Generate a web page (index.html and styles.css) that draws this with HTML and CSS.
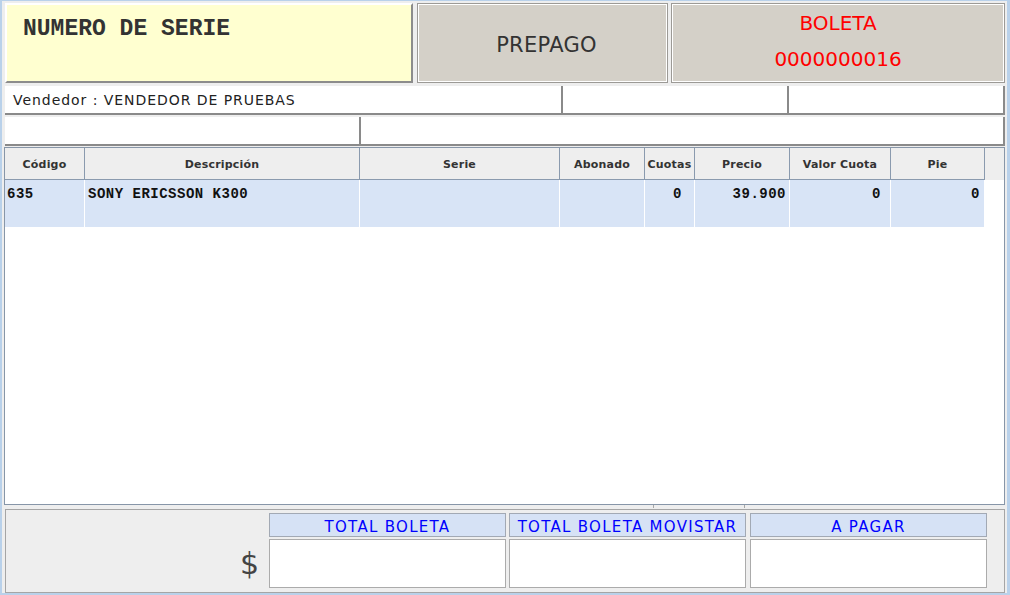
FILE: index.html
```html
<!DOCTYPE html>
<html lang="es">
<head>
<meta charset="utf-8">
<title>Venta</title>
<link rel="stylesheet" href="styles.css">
</head>
<body>
<div class="window">
  <div class="top">
    <div class="serie">NUMERO DE SERIE</div>
    <div class="prepago">PREPAGO</div>
    <div class="boleta"><div>BOLETA</div><div>0000000016</div></div>
  </div>
  <div class="row2">
    <div class="field w558 vend">Vendedor : VENDEDOR DE PRUEBAS</div>
    <div class="field w226"></div>
    <div class="field w216"></div>
  </div>
  <div class="row3">
    <div class="field w356"></div>
    <div class="field w644"></div>
  </div>
  <div class="table">
    <div class="grid thead">
      <div class="th">Código</div>
      <div class="th">Descripción</div>
      <div class="th">Serie</div>
      <div class="th">Abonado</div>
      <div class="th">Cuotas</div>
      <div class="th">Precio</div>
      <div class="th">Valor Cuota</div>
      <div class="th">Pie</div>
      <div class="th filler"></div>
    </div>
    <div class="grid trow">
      <div class="td cod">635</div>
      <div class="td desc">SONY ERICSSON K300</div>
      <div class="td"></div>
      <div class="td"></div>
      <div class="td num pr12">0</div>
      <div class="td num pr3">39.900</div>
      <div class="td num pr10">0</div>
      <div class="td num pr4">0</div>
      <div class="td blank"></div>
    </div>
  </div>
  <div class="ticks"><span class="tick t1"></span><span class="tick t2"></span></div>
  <div class="bottom">
    <div class="dollar">$</div>
    <div class="tot">
      <div class="tot-h">TOTAL BOLETA</div>
      <div class="tot-v"></div>
    </div>
    <div class="tot">
      <div class="tot-h">TOTAL BOLETA MOVISTAR</div>
      <div class="tot-v"></div>
    </div>
    <div class="tot last">
      <div class="tot-h">A PAGAR</div>
      <div class="tot-v"></div>
    </div>
  </div>
</div>
</body>
</html>
```

FILE: styles.css
```css
* { box-sizing: border-box; }
html, body { margin: 0; padding: 0; }
body { background: #eeeeee; font-family: "DejaVu Sans", sans-serif; }

.window {
  width: 1010px;
  height: 595px;
  background: #eeeeee;
  border-style: solid;
  border-color: #b9d1ea;
  border-width: 1px 3px 2px 2px;
  padding: 2px 2px 0 3px;
  display: flex;
  flex-direction: column;
  overflow: hidden;
}

/* top row */
.top { display: flex; height: 80px; }
.serie {
  width: 408px;
  background: #ffffd0;
  border-style: solid;
  border-width: 2px;
  border-color: #ffffff #8c8c8c #8c8c8c #ffffff;
  font-family: "Liberation Mono", monospace;
  font-weight: bold;
  font-size: 23px;
  color: #333;
  padding: 11px 0 0 16px;
  line-height: normal;
}
.prepago {
  width: 251px;
  margin-left: 4px;
  background: #d4d0c8;
  border: 1px solid #9c9a96;
  box-shadow: inset 0 0 0 1px #ffffff;
  display: flex;
  align-items: center;
  justify-content: center;
  padding: 3px 0 0 8px;
  font-size: 21px;
  letter-spacing: 0.3px;
  color: #333;
}
.boleta {
  width: 334px;
  margin-left: 3px;
  background: #d4d0c8;
  border: 1px solid #9c9a96;
  box-shadow: inset 0 0 0 1px #ffffff;
  text-align: center;
  color: #ff0000;
  font-size: 20px;
  line-height: 36px;
  padding-top: 1px;
}

/* form rows */
.row2 { display: flex; height: 29px; margin-top: 3px; }
.row3 { display: flex; height: 29px; margin-top: 2px; }
.field {
  background: #ffffff;
  border-right: 2px solid #8a8a8a;
  border-bottom: 2px solid #8a8a8a;
}
.w558 { width: 558px; }
.w226 { width: 226px; }
.w216 { width: 216px; }
.w356 { width: 356px; }
.w644 { width: 644px; }
.vend {
  font-size: 14px;
  letter-spacing: 0.95px;
  color: #222;
  padding: 6px 0 0 8px;
  white-space: nowrap;
}

/* table */
.table {
  margin-top: 1px;
  margin-left: -1px;
  width: 1001px;
  height: 358px;
  background: #ffffff;
  border: 1px solid #8796a8;
}
.grid {
  display: grid;
  grid-template-columns: 80px 275px 200px 85px 50px 95px 101px 94px 18px;
}
.thead { height: 32px; background: #eeeeee; }
.th {
  border-right: 1px solid #8a9aae;
  border-bottom: 1px solid #8a9aae;
  font-size: 11px;
  font-weight: bold;
  color: #333;
  display: flex;
  align-items: center;
  justify-content: center;
  padding-top: 2px;
  white-space: nowrap;
  letter-spacing: 0.2px;
}
.th.filler { border-right: none; border-bottom: none; }
.trow { height: 47px; }
.td {
  background: #d8e4f6;
  border-right: 1px solid #ffffff;
  font-family: "Liberation Mono", monospace;
  font-weight: bold;
  font-size: 14px;
  letter-spacing: 0.5px;
  line-height: 16px;
  color: #111;
  padding-top: 6px;
  white-space: nowrap;
}
.td.blank { background: #ffffff; border-right: none; }
.cod { padding-left: 2px; }
.desc { padding-left: 3px; }
.num { text-align: right; }
.pr12 { padding-right: 12px; }
.pr3 { padding-right: 3px; }
.pr10 { padding-right: 9px; }
.pr4 { padding-right: 4px; }

/* splitter ticks */
.ticks { height: 4px; display: flex; }
.tick { display: block; width: 1px; height: 3px; background: #a8a8a8; }
.t1 { margin-left: 648px; }
.t2 { margin-left: 90px; }

/* bottom panel */
.bottom {
  height: 84px;
  border: 1px solid #a5a5a5;
  background: #eeeeee;
  display: flex;
  padding: 3px 17px 3px 0;
}
.dollar {
  flex: 1;
  text-align: right;
  padding-right: 7px;
  margin-top: 33px;
  font-size: 30px;
  line-height: normal;
  color: #444;
}
.tot {
  width: 237px;
  margin-left: 3px;
  display: flex;
  flex-direction: column;
}
.tot.last { margin-left: 4px; }
.tot-h {
  height: 24px;
  background: #d6e2f5;
  border: 1px solid #a2a9b4;
  color: #0000ff;
  font-size: 15px;
  letter-spacing: 1.3px;
  text-align: center;
  line-height: 24px;
  padding-top: 1px;
  white-space: nowrap;
  overflow: hidden;
}
.tot-v {
  margin-top: 2px;
  height: 49px;
  background: #ffffff;
  border: 1px solid #ababab;
}
```
